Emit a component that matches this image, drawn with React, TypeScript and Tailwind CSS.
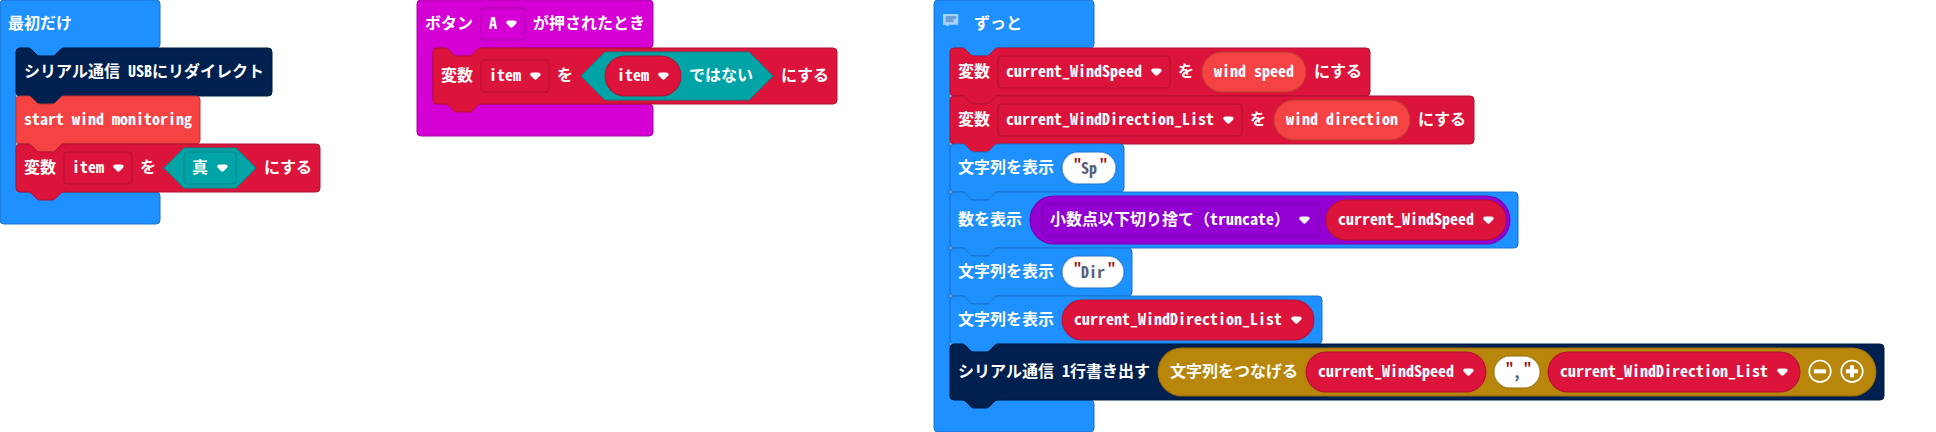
import type { ReactNode } from 'react';

const NOTCH = 'c2,0 3,1 4,2 l4,4 c1,1 2,2 4,2 h12 c2,0 3,-1 4,-2 l4,-4 c1,-1 2,-2 4,-2';
const NOTCH_BACK = 'c-2,0 -3,1 -4,2 l-4,4 c-1,1 -2,2 -4,2 h-12 c-2,0 -3,-1 -4,-2 l-4,-4 c-1,-1 -2,-2 -4,-2';

const BACKING = 'pointer-events-none absolute left-0 top-0 -z-10 overflow-visible';

/** Outline of a stackable block: notch on top, tab below. */
function StatementShape({ w, h, tone }: { w: number; h: number; tone: string }) {
  const d = `M0,4 a4,4 0 0 1 4,-4 H12 ${NOTCH} H${w - 4} a4,4 0 0 1 4,4 V${h - 4} a4,4 0 0 1 -4,4 H48 ${NOTCH_BACK} H4 a4,4 0 0 1 -4,-4 z`;
  return (
    <svg className={BACKING} width={w} height={h}>
      <path className={tone} d={d} />
    </svg>
  );
}

/** Outline of an event block wrapping a stack of statements. */
function EventShape({ w, h, mouth, tone }: { w: number; h: number; mouth: number; tone: string }) {
  const end = 48 + mouth;
  const d = `M0,4 a4,4 0 0 1 4,-4 H${w - 4} a4,4 0 0 1 4,4 V44 a4,4 0 0 1 -4,4 H64 ${NOTCH_BACK} H20 a4,4 0 0 0 -4,4 V${end - 4} a4,4 0 0 0 4,4 H${w - 4} a4,4 0 0 1 4,4 V${h - 4} a4,4 0 0 1 -4,4 H4 a4,4 0 0 1 -4,-4 z`;
  return (
    <svg className={BACKING} width={w} height={h}>
      <path className={tone} d={d} />
    </svg>
  );
}

const TONES = {
  blue: 'fill-[#1E90FF] stroke-[#1873cc]',
  navy: 'fill-[#002050] stroke-[#001a40]',
  coral: 'fill-[#F54242] stroke-[#c43535]',
  red: 'fill-[#DC143C] stroke-[#b01030]',
  magenta: 'fill-[#D400D4] stroke-[#aa00aa]',
};

type EventProps = { w?: number; h: number; mouth: number; tone: string; head: ReactNode; children: ReactNode };

function Event({ w = 160, h, mouth, tone, head, children }: EventProps) {
  return (
    <section className="relative isolate flex flex-col pb-8">
      <EventShape w={w} h={h} mouth={mouth} tone={tone} />
      <header className="flex h-12 items-center gap-2 px-2">{head}</header>
      <div className="flex flex-col items-start pl-4">{children}</div>
    </section>
  );
}

function Row({ w, tall, tone, children }: { w: number; tall?: boolean; tone: string; children: ReactNode }) {
  return (
    <div className={`relative isolate flex items-center gap-2 px-2 ${tall ? 'h-14' : 'h-12'}`}>
      <StatementShape w={w} h={tall ? 56 : 48} tone={tone} />
      {children}
    </div>
  );
}

function T({ children }: { children: ReactNode }) {
  return <span className="whitespace-pre pb-1">{children}</span>;
}

function Arrow() {
  return (
    <svg className="h-3 w-3 shrink-0 overflow-visible fill-white" viewBox="0 0 12 12">
      <path
        transform="translate(1.2 2.4) scale(0.82)"
        d="M12.71,2.44A2.41,2.41,0,0,1,12,4.16L8.08,8.08a2.45,2.45,0,0,1-3.45,0L0.72,4.16A2.42,2.42,0,0,1,0,2.44,2.48,2.48,0,0,1,.71.71C1,0.47,1.43,0,6.36,0S11.75,0.46,12,.71A2.44,2.44,0,0,1,12.71,2.44Z"
      />
    </svg>
  );
}

const EDGE = {
  red: 'shadow-[0_0_0_0.5px_#b01030,inset_0_0_0_0.5px_#b01030]',
  magenta: 'shadow-[0_0_0_0.5px_#aa00aa,inset_0_0_0_0.5px_#aa00aa]',
  teal: 'shadow-[0_0_0_0.5px_#008385,inset_0_0_0_0.5px_#008385]',
  purple: 'shadow-[0_0_0_0.5px_#7600a9,inset_0_0_0_0.5px_#7600a9]',
  coral: 'shadow-[0_0_0_0.5px_#b93a32,inset_0_0_0_0.5px_#b93a32]',
  gold: 'shadow-[0_0_0_0.5px_#936b09,inset_0_0_0_0.5px_#936b09]',
  blue: 'shadow-[0_0_0_0.5px_#1873cc,inset_0_0_0_0.5px_#1873cc]',
};

function Field({ edge, children }: { edge: string; children: ReactNode }) {
  return (
    <div className={`flex h-8 items-center gap-2 rounded px-2 ${edge}`}>
      <T>{children}</T>
      <Arrow />
    </div>
  );
}

function Variable({ children }: { children: ReactNode }) {
  return (
    <div className={`flex h-10 items-center gap-2 rounded-full bg-[#DC143C] px-3 ${EDGE.red}`}>
      <T>{children}</T>
      <Arrow />
    </div>
  );
}

function Reporter({ children }: { children: ReactNode }) {
  return (
    <div className={`flex h-10 items-center rounded-full bg-[#F54242] px-3 ${EDGE.coral}`}>
      <T>{children}</T>
    </div>
  );
}

function Quote() {
  return <span className="w-[7px] pb-2.5 text-[14px] font-bold leading-none text-[#a31515]">"</span>;
}

function TextInput({ edge, children }: { edge: string; children: string }) {
  return (
    <div className={`flex h-8 items-center rounded-full bg-white pl-3 pr-[9px] text-[#575E75] ${edge}`}>
      <Quote />
      <span className="mr-[3px] whitespace-pre pb-0.5 font-semibold">{children}</span>
      <Quote />
    </div>
  );
}

function Hexagon({ w, h, className, children }: { w: number; h: number; className: string; children: ReactNode }) {
  const r = h / 2;
  return (
    <div className={`relative isolate flex items-center gap-2 ${className}`}>
      <svg className={BACKING} width={w} height={h}>
        <path className="fill-[#00A4A6] stroke-[#008385]" d={`M${r},0 H${w - r} l${r},${r} l${-r},${r} H${r} l${-r},${-r} z`} />
      </svg>
      {children}
    </div>
  );
}

function CommentIcon() {
  return (
    <svg className="h-6 w-6 shrink-0" viewBox="0 0 24 24">
      <path className="fill-[#a5d2ff]" d="M1,2 h15.3 v10.7 h-8.8 l-2,1.6 l-2,-1.6 h-2.5 z" />
      <path className="fill-[#6f9fd8]" d="M3.7,4 h10.3 v3 h-2.6 v3.3 h-7.7 z" />
    </svg>
  );
}

function RoundButton({ plus }: { plus?: boolean }) {
  return (
    <svg className="mb-[2px] h-6 w-6 shrink-0" viewBox="0 0 24 24">
      <circle cx="12" cy="12.3" r="10.8" className="fill-none stroke-white stroke-[1.6]" />
      <path className="fill-none stroke-white stroke-[4]" d={plus ? 'M6,12.3 h12 M12,6.3 v12' : 'M6,12.3 h12'} />
    </svg>
  );
}

export default function App() {
  return (
    <main className="flex h-[432px] w-[1936px] items-start overflow-hidden bg-white font-['Noto_Sans_Mono_CJK_JP','Noto_Sans_CJK_JP','Liberation_Mono',monospace] text-base font-bold leading-6 text-white">
      <div className="w-[417px]">
        <Event h={224} mouth={144} tone={TONES.blue} head={<T>最初だけ</T>}>
          <Row w={256} tone={TONES.navy}>
            <T>シリアル通信 USBにリダイレクト</T>
          </Row>
          <Row w={184} tone={TONES.coral}>
            <T>start wind monitoring</T>
          </Row>
          <Row w={304} tone={TONES.red}>
            <T>変数</T>
            <Field edge={EDGE.red}>item</Field>
            <T>を</T>
            <Hexagon w={92} h={40} className="h-10 px-5">
              <Field edge={EDGE.teal}>真</Field>
            </Hexagon>
            <T>にする</T>
          </Row>
        </Event>
      </div>

      <div className="w-[517px]">
        <Event
          w={236}
          h={136}
          mouth={56}
          tone={TONES.magenta}
          head={
            <>
              <T>ボタン</T>
              <Field edge={EDGE.magenta}>A</Field>
              <T>が押されたとき</T>
            </>
          }
        >
          <Row w={404} tall tone={TONES.red}>
            <T>変数</T>
            <Field edge={EDGE.red}>item</Field>
            <T>を</T>
            <Hexagon w={192} h={48} className="h-12 pl-6 pr-5">
              <Variable>item</Variable>
              <T>ではない</T>
            </Hexagon>
            <T>にする</T>
          </Row>
        </Event>
      </div>

      <Event
        h={432}
        mouth={352}
        tone={TONES.blue}
        head={
          <>
            <CommentIcon />
            <T>ずっと</T>
          </>
        }
      >
        <Row w={420} tone={TONES.red}>
          <T>変数</T>
          <Field edge={EDGE.red}>current_WindSpeed</Field>
          <T>を</T>
          <Reporter>wind speed</Reporter>
          <T>にする</T>
        </Row>
        <Row w={524} tone={TONES.red}>
          <T>変数</T>
          <Field edge={EDGE.red}>current_WindDirection_List</Field>
          <T>を</T>
          <Reporter>wind direction</Reporter>
          <T>にする</T>
        </Row>
        <Row w={174} tone={TONES.blue}>
          <T>文字列を表示</T>
          <TextInput edge={EDGE.blue}>Sp</TextInput>
        </Row>
        <Row w={568} tall tone={TONES.blue}>
          <T>数を表示</T>
          <div className={`flex h-12 items-center gap-2 rounded-full bg-[#9400D3] pl-3 pr-1 ${EDGE.purple}`}>
            <Field edge={EDGE.purple}>小数点以下切り捨て（truncate）</Field>
            <Variable>current_WindSpeed</Variable>
          </div>
        </Row>
        <Row w={182} tone={TONES.blue}>
          <T>文字列を表示</T>
          <TextInput edge={EDGE.blue}>Dir</TextInput>
        </Row>
        <Row w={372} tone={TONES.blue}>
          <T>文字列を表示</T>
          <Variable>current_WindDirection_List</Variable>
        </Row>
        <Row w={934} tall tone={TONES.navy}>
          <T>シリアル通信 1行書き出す</T>
          <div className={`flex h-12 items-center gap-2 rounded-full bg-[#B8860B] px-3 ${EDGE.gold}`}>
            <T>文字列をつなげる</T>
            <Variable>current_WindSpeed</Variable>
            <TextInput edge={EDGE.gold}>,</TextInput>
            <Variable>current_WindDirection_List</Variable>
            <RoundButton />
            <RoundButton plus />
          </div>
        </Row>
      </Event>
    </main>
  );
}
